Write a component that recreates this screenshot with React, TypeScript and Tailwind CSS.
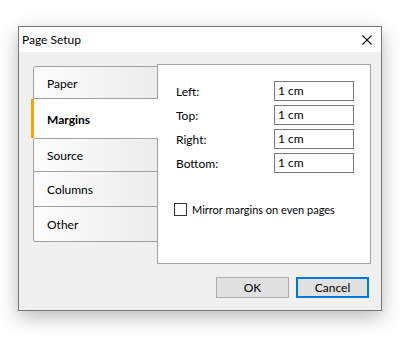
import React from "react";

const font = { fontFamily: 'Lato, "Noto Sans", sans-serif' };

function Tab({ label, cls }: { label: string; cls: string }) {
  return (
    <div
      className={`flex items-center pl-[13px] text-[12px] text-black border border-[#a0a0a0] bg-gradient-to-r from-[#fdfdfd] to-[#ececec] ${cls}`}
    >
      <span className="pt-[2px]">{label}</span>
    </div>
  );
}

function Row({ label }: { label: string }) {
  return (
    <div className="flex items-center h-[20px]">
      <div className="w-[98px] text-[12px] text-black leading-none pt-[2px]">{label}</div>
      <div className="w-[80px] h-[20px] border border-[#7a7a7a] bg-white flex items-center pl-[3px] text-[12px] text-black">
        1 cm
      </div>
    </div>
  );
}

export default function App() {
  return (
    <div className="w-[405px] h-[343px] bg-white pt-[26px] pl-[18px]" style={font}>
      <div className="w-[364px] h-[285px] border border-[#777777] flex flex-col bg-[#f0f0f0] shadow-[0_6px_18px_rgba(0,0,0,0.28)]">
        <div className="h-[25px] bg-white flex items-center justify-between pl-[3px] pr-[9px] shrink-0">
          <span className="text-[12px] text-black pt-[1px]">Page Setup</span>
          <svg width="10" height="10" viewBox="0 0 10 10" className="block">
            <path d="M0.5 0.5 L9.5 9.5 M9.5 0.5 L0.5 9.5" stroke="#111" strokeWidth="1.1" />
          </svg>
        </div>
        <div className="flex-1 flex flex-col pt-[12px] pl-[14px]">
          <div className="flex h-[200px]">
            <div className="w-[125px] pt-[2px] flex flex-col">
              <Tab label="Paper" cls="h-[33px] rounded-tl-[3px]" />
              <div className="relative z-10 h-[39px] w-[127px] -ml-[2px] bg-white border-l-[3px] border-[#f7a600] flex items-center pl-[13px] text-[12px] font-bold text-black">
                <span className="pt-[2px]">Margins</span>
              </div>
              <Tab label="Source" cls="h-[34px] rounded-tl-[2px]" />
              <Tab label="Columns" cls="h-[36px] -mt-px rounded-tl-[2px]" />
              <Tab label="Other" cls="h-[36px] -mt-px rounded-tl-[2px] rounded-bl-[2px]" />
            </div>
            <div className="w-[214px] h-[200px] -ml-px border border-[#a0a0a0] bg-white pt-[16px] pl-[18px] flex flex-col">
              <div className="flex flex-col gap-[4px]">
                <Row label="Left:" />
                <Row label="Top:" />
                <Row label="Right:" />
                <Row label="Bottom:" />
              </div>
              <div className="flex items-center mt-[30px] -ml-[2px] h-[13px]">
                <div className="w-[13px] h-[13px] border border-[#333333] bg-white" />
                <span className="ml-[5px] text-[11px] text-black pt-[1px]">Mirror margins on even pages</span>
              </div>
            </div>
          </div>
          <div className="flex justify-end gap-[7px] pr-[12px] mt-[13px]">
            <div className="w-[73px] h-[21px] border border-[#adadad] bg-[#e1e1e1] flex items-center justify-center text-[12px] text-black">
              OK
            </div>
            <div className="w-[73px] h-[21px] border-2 border-[#0078d7] bg-[#e1e1e1] flex items-center justify-center text-[12px] text-black">
              Cancel
            </div>
          </div>
        </div>
      </div>
    </div>
  );
}
